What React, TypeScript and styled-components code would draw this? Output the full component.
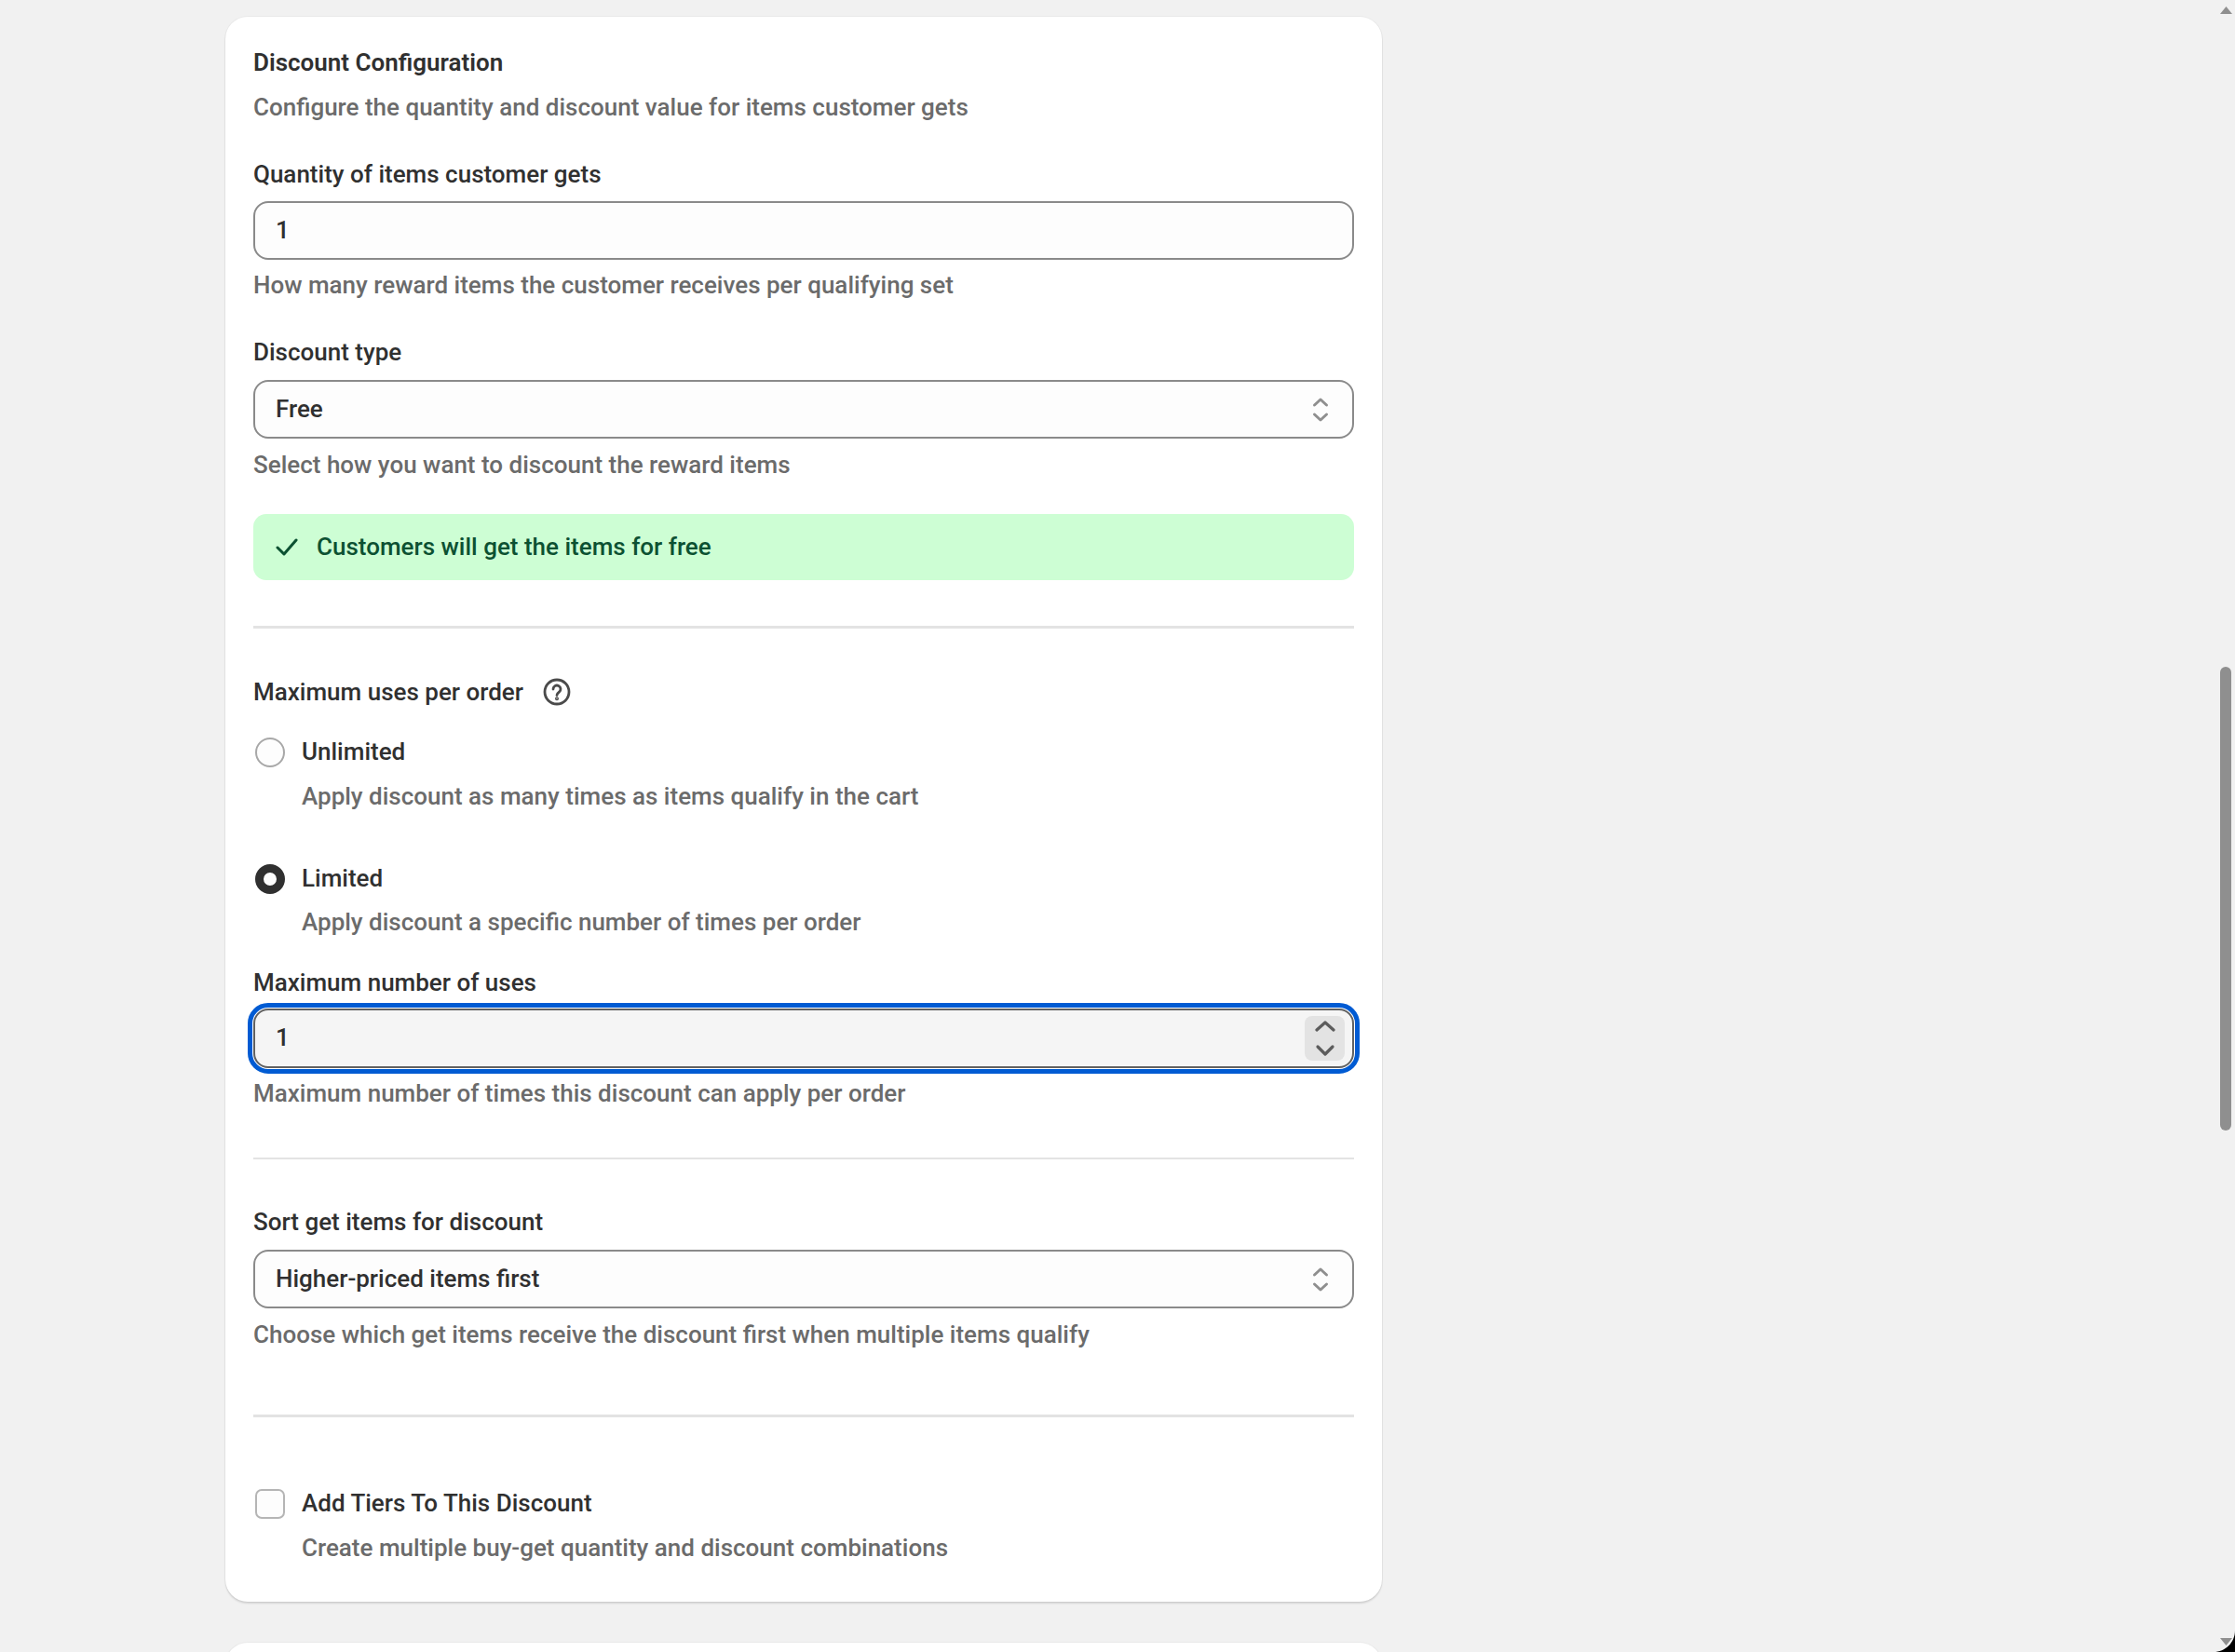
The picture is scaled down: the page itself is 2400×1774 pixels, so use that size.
import React from "react";
import styled, { createGlobalStyle } from "styled-components";

const Global = createGlobalStyle`
  html, body { margin: 0; padding: 0; height: 100%; background: #f1f1f1; overflow: hidden; }
  body { font-family: Roboto, "Liberation Sans", sans-serif; color: #303030; }
`;

const Page = styled.main`
  height: 1774px;
  box-sizing: border-box;
  padding: 18px 0 0 242px;
  display: flex;
  flex-direction: column;
  gap: 44px;
  overflow: hidden;
`;

const Card = styled.section`
  width: 1242px;
  box-sizing: border-box;
  flex: none;
  background: #fff;
  border-radius: 24px;
  padding: 30px 30px 39px;
  box-shadow: 0 2px 2px rgba(0, 0, 0, 0.12), 0 0 0 1px rgba(0, 0, 0, 0.03);
`;

const EmptyCard = styled(Card)`
  height: 120px;
`;

const Title = styled.h2`
  margin: 0;
  font-size: 26px;
  font-weight: 600;
  line-height: 38px;
  color: #303030;
`;

const Label = styled.div<{ $top: number }>`
  margin-top: ${(p) => p.$top}px;
  display: flex;
  align-items: center;
  font-size: 26px;
  font-weight: 500;
  line-height: 38px;
  color: #303030;
`;

const Help = styled.p<{ $top: number }>`
  margin: ${(p) => p.$top}px 0 0;
  font-size: 26px;
  font-weight: 500;
  line-height: 38px;
  color: #6b6b6b;
`;

const Shell = styled.div<{ $top: number }>`
  margin-top: ${(p) => p.$top}px;
  height: 63px;
  box-sizing: border-box;
  display: flex;
  align-items: center;
  justify-content: space-between;
  padding: 0 22px;
  background: #fdfdfd;
  border: 2px solid #8a8a8a;
  border-radius: 16px;
`;

const FocusShell = styled(Shell)`
  height: 64px;
  background: #f5f5f5;
  border-color: #616161;
  outline: 5px solid #005bd3;
  outline-offset: 1px;
  padding-right: 8px;
`;

const Value = styled.input`
  flex: 1;
  min-width: 0;
  border: 0;
  padding: 0;
  margin: 0 0 2px;
  background: transparent;
  font: 500 26px Roboto, "Liberation Sans", sans-serif;
  color: #303030;
  outline: none;
`;

const SelectText = styled.span`
  margin-bottom: 2px;
  font-size: 26px;
  font-weight: 500;
  color: #303030;
`;

const Stepper = styled.div`
  width: 43px;
  height: 48px;
  flex: none;
  display: flex;
  align-items: center;
  justify-content: center;
  background: #e3e3e3;
  border-radius: 8px;
`;

const Banner = styled.div`
  margin-top: 34px;
  height: 71px;
  box-sizing: border-box;
  padding: 0 0 1px 24px;
  display: flex;
  align-items: center;
  gap: 20px;
  background: #cdfed4;
  border-radius: 14px;
  font-size: 26px;
  font-weight: 500;
  color: #0c5132;
`;

const Divider = styled.hr<{ $top: number; $thin?: boolean }>`
  margin: ${(p) => p.$top}px 0 0;
  border: 0;
  height: ${(p) => (p.$thin ? 2 : 3)}px;
  background: #e3e3e3;
`;

const Choice = styled.div<{ $top: number }>`
  margin-top: ${(p) => p.$top}px;
  display: flex;
  align-items: center;
  gap: 18px;
  padding-left: 2px;
  font-size: 26px;
  font-weight: 500;
  line-height: 38px;
  color: #303030;
`;

const Radio = styled.span<{ $on?: boolean }>`
  width: 32px;
  height: 32px;
  margin-top: 2px;
  flex: none;
  box-sizing: border-box;
  border-radius: 50%;
  background: #fdfdfd;
  border: ${(p) => (p.$on ? "9px solid #303030" : "2px solid #a8a8a8")};
`;

const Check = styled.span`
  width: 32px;
  height: 32px;
  margin-top: 2px;
  flex: none;
  box-sizing: border-box;
  border-radius: 7px;
  background: #fdfdfd;
  border: 2px solid #b5b5b5;
`;

const Indented = styled(Help)`
  padding-left: 52px;
`;

const HelpIcon = styled.svg`
  width: 30px;
  height: 30px;
  margin-left: 21px;
`;

const ScrollThumb = styled.div`
  position: fixed;
  left: 2384px;
  top: 716px;
  width: 12px;
  height: 498px;
  background: #8f8f8f;
  border-radius: 6px;
`;

const ScrollArrow = styled.svg<{ $bottom?: boolean }>`
  position: fixed;
  left: 2384px;
  top: ${(p) => (p.$bottom ? 1759 : 7)}px;
  width: 13px;
  height: 8px;
`;

const Corner = styled.svg`
  position: fixed;
  right: 0;
  bottom: 0;
  width: 23px;
  height: 23px;
`;

const SelectChevrons = () => (
  <svg width="20" height="28" viewBox="0 0 20 28" fill="none" stroke="#8f8f8f" strokeWidth="3" strokeLinecap="round" strokeLinejoin="round" style={{ marginRight: 2 }}>
    <path d="M3.5 9l6.5-6 6.5 6" />
    <path d="M3.5 19l6.5 6 6.5-6" />
  </svg>
);

const StepChevrons = () => (
  <svg width="22" height="42" viewBox="0 0 22 42" fill="none" stroke="#5c5c5c" strokeWidth="3.2" strokeLinecap="round" strokeLinejoin="round">
    <path d="M2 12l9-8 9 8" />
    <path d="M3 30l8 8 8-8" />
  </svg>
);

export default function App() {
  return (
    <>
      <Global />
      <Page>
        <Card>
          <Title>Discount Configuration</Title>
          <Help $top={10}>Configure the quantity and discount value for items customer gets</Help>

          <Label $top={34}>Quantity of items customer gets</Label>
          <Shell $top={10}>
            <Value readOnly value="1" />
          </Shell>
          <Help $top={8}>How many reward items the customer receives per qualifying set</Help>

          <Label $top={34}>Discount type</Label>
          <Shell $top={11}>
            <SelectText>Free</SelectText>
            <SelectChevrons />
          </Shell>
          <Help $top={9}>Select how you want to discount the reward items</Help>

          <Banner>
            <svg width="24" height="24" viewBox="0 0 24 24" fill="none" stroke="#0c5132" strokeWidth="3" strokeLinecap="round" strokeLinejoin="round">
              <path d="M2 13l7 7L22 5" />
            </svg>
            Customers will get the items for free
          </Banner>

          <Divider $top={49} />

          <Label $top={49}>
            Maximum uses per order
            <HelpIcon viewBox="0 0 30 30" fill="none" stroke="#4a4a4a" strokeWidth="2.8" strokeLinecap="round">
              <circle cx="15" cy="15" r="13" />
              <path d="M11 12a4 4 0 1 1 6.4 3.2c-1.5 1.1-2.4 1.8-2.4 3.3" />
              <circle cx="15" cy="22.2" r="0.6" fill="#4a4a4a" />
            </HelpIcon>
          </Label>

          <Choice $top={26}>
            <Radio />
            Unlimited
          </Choice>
          <Indented $top={10}>Apply discount as many times as items qualify in the cart</Indented>

          <Choice $top={50}>
            <Radio $on />
            Limited
          </Choice>
          <Indented $top={9}>Apply discount a specific number of times per order</Indented>

          <Label $top={27}>Maximum number of uses</Label>
          <FocusShell $top={9}>
            <Value readOnly value="1" />
            <Stepper>
              <StepChevrons />
            </Stepper>
          </FocusShell>
          <Help $top={8}>Maximum number of times this discount can apply per order</Help>

          <Divider $top={50} $thin />

          <Label $top={48}>Sort get items for discount</Label>
          <Shell $top={11}>
            <SelectText>Higher-priced items first</SelectText>
            <SelectChevrons />
          </Shell>
          <Help $top={9}>Choose which get items receive the discount first when multiple items qualify</Help>

          <Divider $top={67} />

          <Choice $top={73}>
            <Check />
            Add Tiers To This Discount
          </Choice>
          <Indented $top={10}>Create multiple buy-get quantity and discount combinations</Indented>
        </Card>
        <EmptyCard />
      </Page>
      <Corner viewBox="0 0 23 23">
        <path d="M23 0v23H0C12.7 23 23 12.7 23 0z" fill="#000" />
      </Corner>
      <ScrollArrow viewBox="0 0 13 8">
        <path d="M6.5 0L13 8H0z" fill="#8f8f8f" />
      </ScrollArrow>
      <ScrollThumb />
      <ScrollArrow $bottom viewBox="0 0 13 8">
        <path d="M0 0h13L6.5 8z" fill="#8f8f8f" />
      </ScrollArrow>
    </>
  );
}
